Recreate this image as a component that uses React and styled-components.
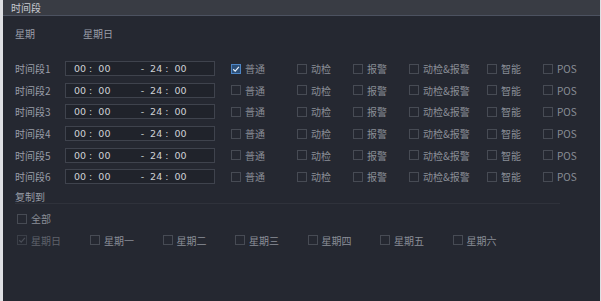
import React from 'react';
import styled, { createGlobalStyle } from 'styled-components';

const Global = createGlobalStyle`
  html, body { margin: 0; padding: 0; background: #dfe0e4; }
  body { font-family: "Noto Sans CJK SC", "Noto Sans", sans-serif; }
`;

const Panel = styled.div`
  margin: 0 1px 0 3px;
  height: 301px;
  background: #252831;
  color: #9a9ea8;
  font-size: 10px;
  overflow: hidden;
`;

const Header = styled.div`
  height: 15px;
  line-height: 15px;
  padding-left: 8px;
  background: #393c44;
  border-bottom: 1px solid #4c5260;
  color: #c8cad0;
  font-size: 10px;
`;

const Body = styled.div`
  padding: 9px 0 0 12px;
`;

const Row = styled.div`
  display: flex;
  align-items: center;
  height: ${p => p.h || 21.6}px;
`;

const Label = styled.div`
  width: ${p => p.w || 50}px;
  flex-shrink: 0;
`;

const TimeBox = styled.div`
  width: 150px;
  height: 15px;
  box-sizing: border-box;
  border: 1px solid #3f434d;
  background: #20232b;
  display: flex;
  align-items: center;
  padding-left: 8px;
  color: #cfd1d6;
  font-family: "DejaVu Sans", sans-serif;
  font-size: 9.5px;
  white-space: pre;
`;

const Options = styled.div`
  display: flex;
  align-items: center;
  margin-left: 16px;
`;

const Check = styled.label`
  display: flex;
  align-items: center;
  width: ${p => p.w}px;
  flex-shrink: 0;
  color: ${p => (p.faint ? '#5f636c' : '#8a8e97')};
`;

const Box = styled.span`
  width: 10px;
  height: 10px;
  box-sizing: border-box;
  border: 1px solid ${p => (p.on ? '#4d86c6' : p.faint ? '#3b3f48' : '#474b54')};
  background: ${p => (p.on ? '#2c4f78' : 'transparent')};
  margin-right: 4px;
  display: flex;
  align-items: center;
  justify-content: center;
  flex-shrink: 0;
`;

const Section = styled.div`
  margin-top: 3px;
  line-height: 12px;
  width: 545px;
  border-bottom: 1px solid #2f323b;
  color: #9a9ea8;
`;

const Days = styled.div`
  display: flex;
  align-items: center;
  height: ${p => p.h || 22}px;
  margin-top: ${p => p.mt || 0}px;
  padding-left: 2px;
`;

const Tick = ({ color }) => (
  <svg width="8" height="8" viewBox="0 0 8 8">
    <path d="M1.2 4.2 L3.2 6.1 L6.9 1.8" fill="none" stroke={color} strokeWidth="1.2" />
  </svg>
);

const Opt = ({ w, on, faint, children }) => (
  <Check w={w} faint={faint}>
    <Box on={on} faint={faint}>{on && <Tick color="#e6eef8" />}{faint && <Tick color="#4a4e57" />}</Box>
    {children}
  </Check>
);

const kinds = [
  ['普通', 66],
  ['动检', 56],
  ['报警', 56],
  ['动检&报警', 78],
  ['智能', 56],
  ['POS', 40],
];

const days = ['星期日', '星期一', '星期二', '星期三', '星期四', '星期五', '星期六'];

export default function App() {
  return (
    <>
      <Global />
      <Panel>
        <Header>时间段</Header>
        <Body>
          <Row h={16}>
            <Label w={68}>星期</Label>
            <span>星期日</span>
          </Row>
          <div style={{ height: 17 }} />
          {[1, 2, 3, 4, 5, 6].map(n => (
            <Row key={n}>
              <Label>时间段{n}</Label>
              <TimeBox>{'00 :  00          -  24 :  00'}</TimeBox>
              <Options>
                {kinds.map(([t, w], i) => (
                  <Opt key={t} w={w} on={n === 1 && i === 0}>{t}</Opt>
                ))}
              </Options>
            </Row>
          ))}
          <Section>复制到</Section>
          <Days mt={4}>
            <Opt w={60}>全部</Opt>
          </Days>
          <Days h={21}>
            {days.map((d, i) => (
              <Opt key={d} w={i === 0 ? 73 : 72.5} faint={i === 0}>{d}</Opt>
            ))}
          </Days>
        </Body>
      </Panel>
    </>
  );
}
